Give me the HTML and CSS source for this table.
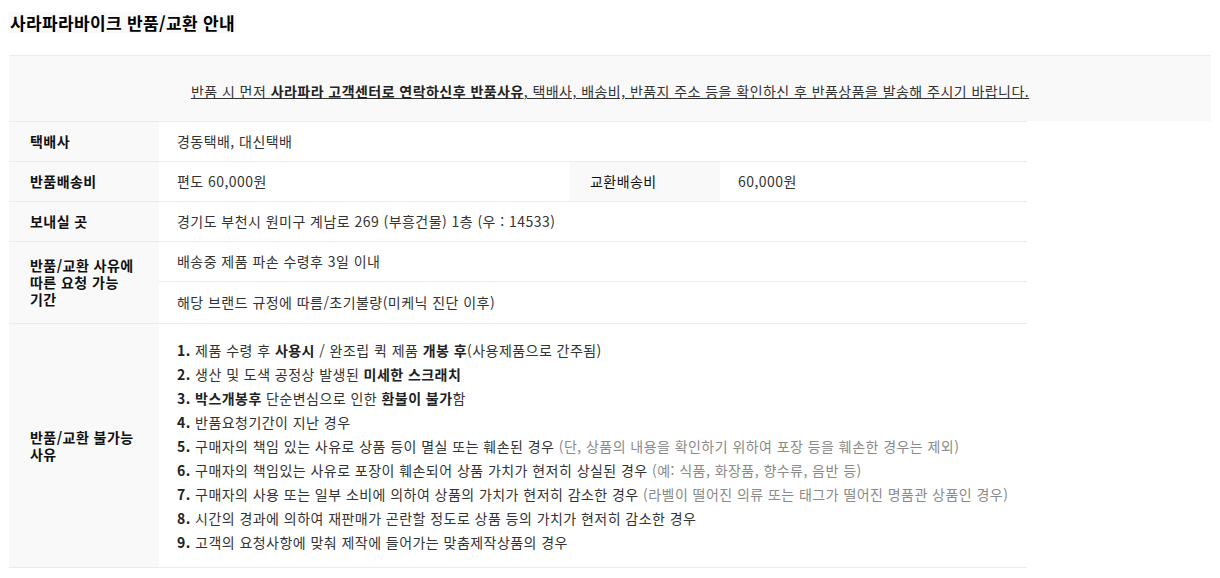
FILE: index.html
```html
<!DOCTYPE html>
<html lang="ko">
<head>
<meta charset="utf-8">
<link rel="stylesheet" href="styles.css">
</head>
<body>
<div class="page">
  <h2 class="title">사라파라바이크 반품/교환 안내</h2>
  <div class="notice">
    <p class="notice-text">반품 시 먼저 <b>사라파라 고객센터로 연락하신후 반품사유</b>, 택배사, 배송비, 반품지 주소 등을 확인하신 후 반품상품을 발송해 주시기 바랍니다.</p>
  </div>
  <table class="info">
    <colgroup>
      <col class="c-label">
      <col class="c-val">
      <col class="c-label">
      <col>
    </colgroup>
    <tr>
      <th>택배사</th>
      <td colspan="3">경동택배, 대신택배</td>
    </tr>
    <tr>
      <th>반품배송비</th>
      <td>편도 60,000원</td>
      <th class="th-normal">교환배송비</th>
      <td>60,000원</td>
    </tr>
    <tr>
      <th>보내실 곳</th>
      <td colspan="3">경기도 부천시 원미구 계남로 269 (부흥건물) 1층 (우 : 14533)</td>
    </tr>
    <tr>
      <th rowspan="2" class="th-wrap">반품/교환 사유에 따른 요청 가능 기간</th>
      <td colspan="3" class="sub1">배송중 제품 파손 수령후 3일 이내</td>
    </tr>
    <tr>
      <td colspan="3" class="sub2">해당 브랜드 규정에 따름/초기불량(미케닉 진단 이후)</td>
    </tr>
    <tr>
      <th class="th-wrap">반품/교환 불가능 사유</th>
      <td colspan="3" class="list-cell">
        <ol class="reasons">
          <li><b>1.</b> 제품 수령 후 <b>사용시</b> / 완조립 퀵 제품 <b>개봉 후</b>(사용제품으로 간주됨)</li>
          <li><b>2.</b> 생산 및 도색 공정상 발생된 <b>미세한 스크래치</b></li>
          <li><b>3. 박스개봉후</b> 단순변심으로 인한 <b>환불이 불가</b>함</li>
          <li><b>4.</b> 반품요청기간이 지난 경우</li>
          <li><b>5.</b> 구매자의 책임 있는 사유로 상품 등이 멸실 또는 훼손된 경우 <span class="muted">(단, 상품의 내용을 확인하기 위하여 포장 등을 훼손한 경우는 제외)</span></li>
          <li><b>6.</b> 구매자의 책임있는 사유로 포장이 훼손되어 상품 가치가 현저히 상실된 경우 <span class="muted">(예: 식품, 화장품, 향수류, 음반 등)</span></li>
          <li><b>7.</b> 구매자의 사용 또는 일부 소비에 의하여 상품의 가치가 현저히 감소한 경우 <span class="muted">(라벨이 떨어진 의류 또는 태그가 떨어진 명품관 상품인 경우)</span></li>
          <li><b>8.</b> 시간의 경과에 의하여 재판매가 곤란할 정도로 상품 등의 가치가 현저히 감소한 경우</li>
          <li><b>9.</b> 고객의 요청사항에 맞춰 제작에 들어가는 맞춤제작상품의 경우</li>
        </ol>
      </td>
    </tr>
  </table>
</div>
</body>
</html>
```

FILE: styles.css
```css
* { box-sizing: border-box; }
html, body { margin: 0; padding: 0; background: #fff; }
body {
  font-family: "Noto Sans CJK KR", "Noto Sans", sans-serif;
  font-size: 14px;
  letter-spacing: 0.45px;
  color: #333;
  word-break: keep-all;
}
.page {
  padding: 12px 9px 0 9px;
}
.title {
  display: inline-block;
  margin: 0 0 0 -1px;
  padding: 0 2px;
  height: 21px;
  line-height: 21px;
  font-size: 17px;
  letter-spacing: 0.35px;
  font-weight: 700;
  color: #000;
  background: #fafafa;
}
.notice {
  margin-top: 21px;
  border-top: 1px solid #ebebeb;
  background: #f9f9f9;
  height: 66px;
  display: flex;
  align-items: center;
  justify-content: center;
}
.notice-text {
  margin: 5px 0 0 0;
  text-decoration: underline;
  color: #333;
  line-height: 18px;
}
.notice-text b { color: #222; }
.info {
  width: 1018px;
  border-collapse: collapse;
  table-layout: fixed;
  border-top: 1px solid #ebebeb;
}
.c-label { width: 150px; }
.c-val { width: 411px; }
.info th, .info td {
  border-bottom: 1px solid #ebebeb;
  text-align: left;
  vertical-align: middle;
  height: 40px;
  padding: 0 18px;
  line-height: 17px;
}
.info th {
  background: #f9f9f9;
  color: #111;
  font-weight: 700;
  padding-left: 21px;
  padding-right: 10px;
}
.info th.th-normal {
  font-weight: 400;
  padding-left: 20px;
}
.info td { color: #333; }
.info td.sub2 { height: 42px; }
.info td.list-cell {
  padding-top: 14px;
  padding-bottom: 13px;
}
.reasons {
  list-style: none;
  margin: 0;
  padding: 0;
}
.reasons li {
  line-height: 24px;
  color: #333;
}
.reasons b { color: #222; }
.muted { color: #8a8a8a; }
```
